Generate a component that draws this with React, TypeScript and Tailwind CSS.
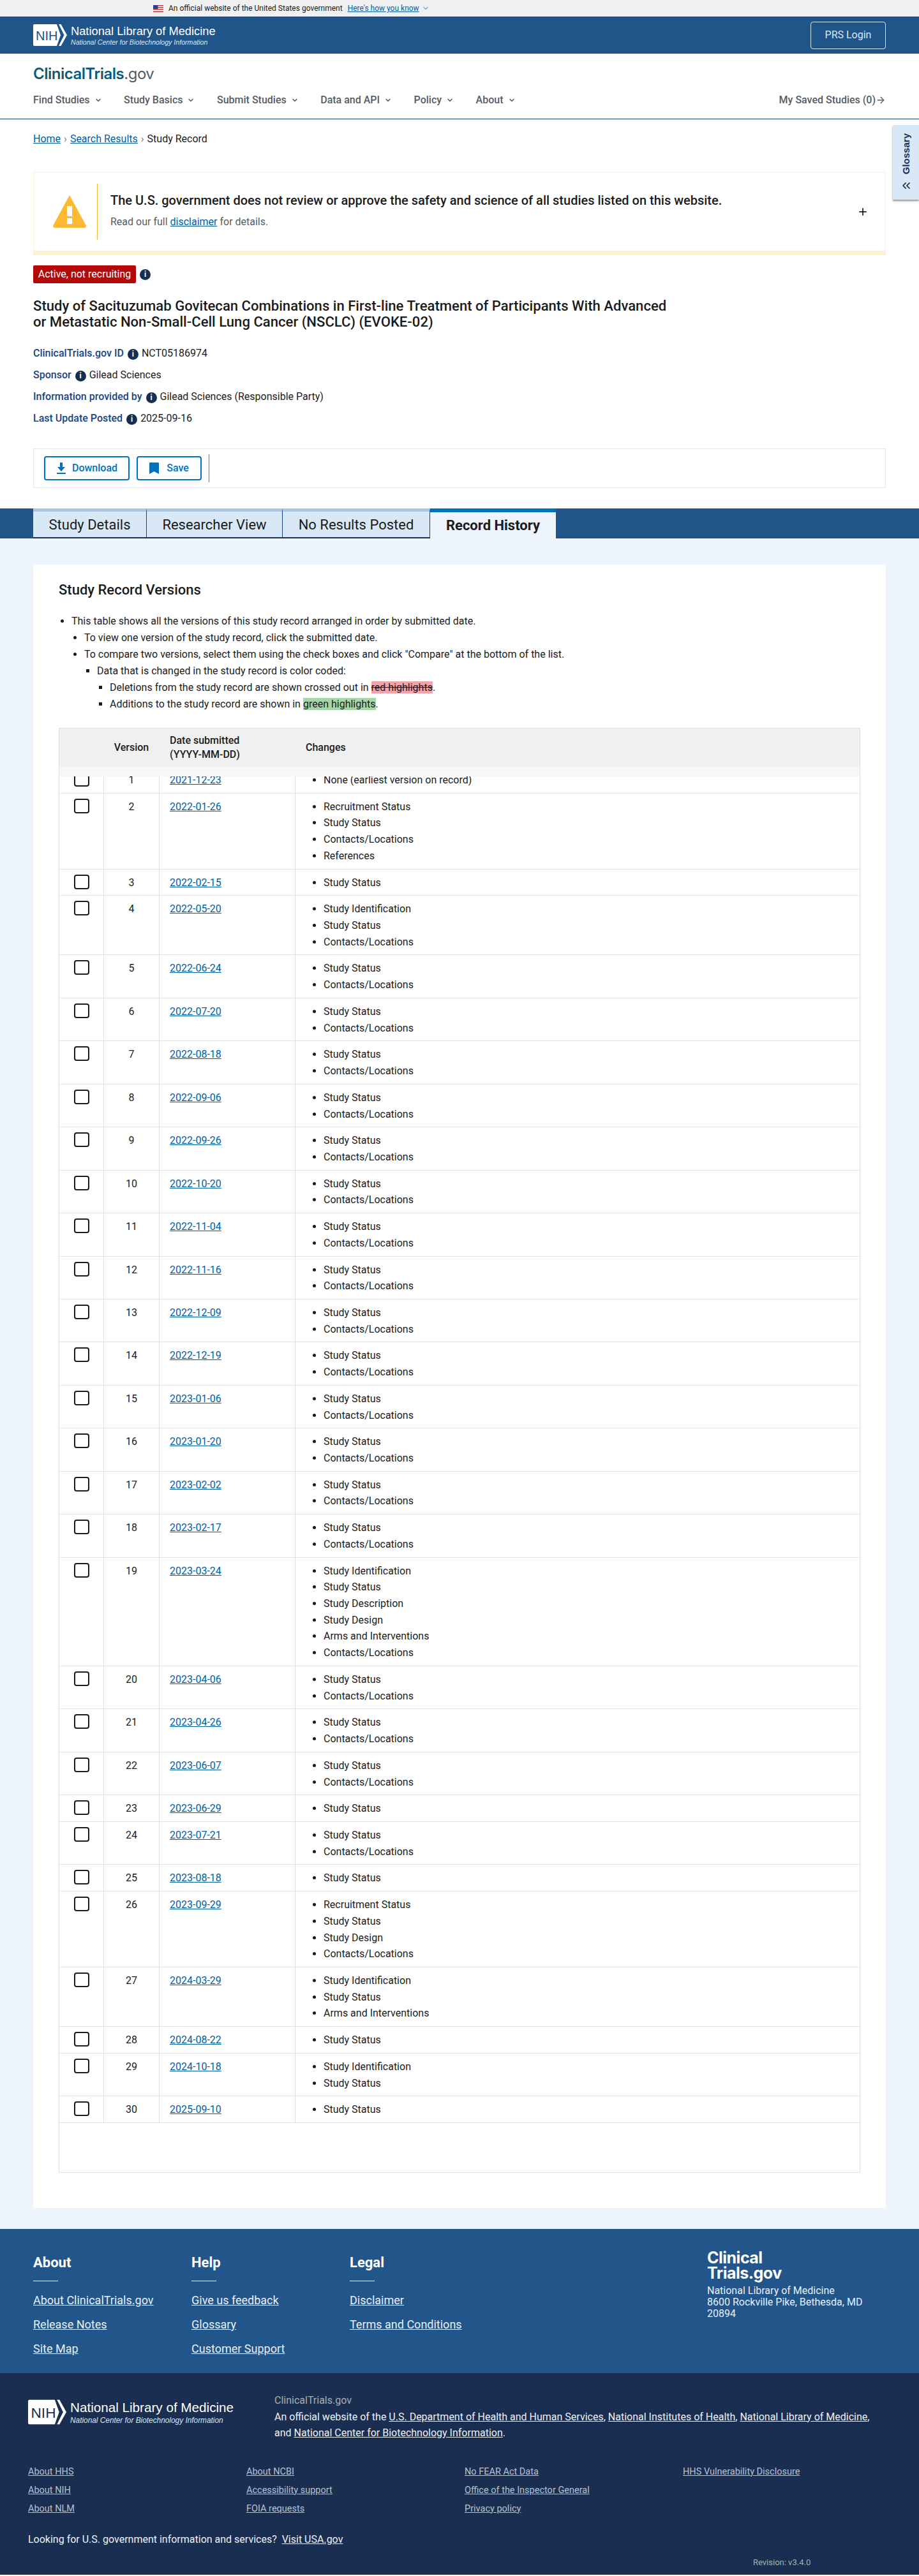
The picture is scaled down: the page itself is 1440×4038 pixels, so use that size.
import React from 'react';
import { ArrowRight, ChevronDown, ChevronsLeft, Plus } from 'lucide-react';

const SS = 'Study Status';
const CL = 'Contacts/Locations';
const SI = 'Study Identification';
const RS = 'Recruitment Status';
const AI = 'Arms and Interventions';

const VERSIONS: { date: string; changes: string[] }[] = [
  { date: '2021-12-23', changes: ['None (earliest version on record)'] },
  { date: '2022-01-26', changes: [RS, SS, CL, 'References'] },
  { date: '2022-02-15', changes: [SS] },
  { date: '2022-05-20', changes: [SI, SS, CL] },
  { date: '2022-06-24', changes: [SS, CL] },
  { date: '2022-07-20', changes: [SS, CL] },
  { date: '2022-08-18', changes: [SS, CL] },
  { date: '2022-09-06', changes: [SS, CL] },
  { date: '2022-09-26', changes: [SS, CL] },
  { date: '2022-10-20', changes: [SS, CL] },
  { date: '2022-11-04', changes: [SS, CL] },
  { date: '2022-11-16', changes: [SS, CL] },
  { date: '2022-12-09', changes: [SS, CL] },
  { date: '2022-12-19', changes: [SS, CL] },
  { date: '2023-01-06', changes: [SS, CL] },
  { date: '2023-01-20', changes: [SS, CL] },
  { date: '2023-02-02', changes: [SS, CL] },
  { date: '2023-02-17', changes: [SS, CL] },
  { date: '2023-03-24', changes: [SI, SS, 'Study Description', 'Study Design', AI, CL] },
  { date: '2023-04-06', changes: [SS, CL] },
  { date: '2023-04-26', changes: [SS, CL] },
  { date: '2023-06-07', changes: [SS, CL] },
  { date: '2023-06-29', changes: [SS] },
  { date: '2023-07-21', changes: [SS, CL] },
  { date: '2023-08-18', changes: [SS] },
  { date: '2023-09-29', changes: [RS, SS, 'Study Design', CL] },
  { date: '2024-03-29', changes: [SI, SS, AI] },
  { date: '2024-08-22', changes: [SS] },
  { date: '2024-10-18', changes: [SI, SS] },
  { date: '2025-09-10', changes: [SS] },
];

const NAV = ['Find Studies', 'Study Basics', 'Submit Studies', 'Data and API', 'Policy', 'About'];

const NihLogo = ({ ink, width, height }: { ink: string; width: number; height: number }) => (
  <svg width={width} height={height} viewBox="0 0 53 34" className="shrink-0">
    <path d="M2 0H37L43 17L37 34H2a2 2 0 0 1-2-2V2a2 2 0 0 1 2-2z" fill="#fff" />
    <path d="M40 0h3.500L53 17L43.500 34H40L48.500 17z" fill="#fff" />
    <text x="4" y="25" fontFamily="Liberation Sans, sans-serif" fontSize="20" fill={ink}>NIH</text>
  </svg>
);

const InfoDot = () => (
  <span className="inline-flex h-[17px] w-[17px] shrink-0 items-center justify-center rounded-full bg-[#162e51] text-[12px] font-bold leading-none text-white">
    i
  </span>
);

const MetaRow = ({ label, value }: { label: string; value: string }) => (
  <div className="flex h-6 items-center">
    <span className="font-medium text-[#1a4480]">{label}</span>
    <span className="ml-[6px] mr-[5px]"><InfoDot /></span>
    <span className="text-[#1b1b1b]">{value}</span>
  </div>
);

const Tab = ({ label, className }: { label: string; className: string }) => (
  <div className={`flex h-[47px] items-center justify-center border-t-[5px] border-b-2 border-r border-t-[#a8c6e6] border-b-[#162e51] border-r-[#1a4480] bg-[#d9e8f6] text-[22px] text-[#1b1b1b] ${className}`}>
    {label}
  </div>
);

const FooterColumn = ({ title, links }: { title: string; links: string[] }) => (
  <div className="w-[248px]">
    <div className="text-[22px] font-bold leading-[28px] text-white">{title}</div>
    <div className="mt-[14px] h-px w-[39px] bg-white" />
    <div className="mt-[16px] flex flex-col gap-[10px]">
      {links.map((l) => (
        <a key={l} className="block h-[28px] text-[18px] leading-[28px] text-[#e8f0f8] underline">{l}</a>
      ))}
    </div>
  </div>
);

const SmallLinks = ({ links, className }: { links: string[]; className: string }) => (
  <div className={`flex flex-col gap-[9px] ${className}`}>
    {links.map((l) => (
      <a key={l} className="block h-5 text-[14.500px] leading-5 text-[#b5c2d4] underline">{l}</a>
    ))}
  </div>
);

export default function App() {
  return (
    <div className="relative bg-white [font-family:Roboto,sans-serif] text-[16px] text-[#1b1b1b]">
      {/* Gov banner */}
      <div className="flex h-[26px] items-center bg-[#f0f0f0] pl-[240px] text-[12px]">
        <svg width="16" height="11" viewBox="0 0 16 11" className="shrink-0">
          <rect width="16" height="11" fill="#fff" />
          <path d="M0 0h16v1.500H0zM0 3h16v1.500H0zM0 6h16v1.500H0zM0 9.500h16V11H0z" fill="#c8372d" />
          <rect width="7.500" height="6" fill="#2f3f8f" />
        </svg>
        <span className="ml-2">An official website of the United States government</span>
        <a className="ml-2 text-[#005ea2] underline">Here's how you know</a>
        <ChevronDown className="ml-1 h-3 w-3 text-[#005ea2]" />
      </div>

      {/* NIH bar */}
      <div className="flex h-[58px] items-center justify-between border-y border-y-[#1a4070] bg-[#20558a] pl-[52px] pr-[52px]">
        <div className="flex items-center">
          <NihLogo ink="#20558a" width={53} height={34} />
          <div className="ml-[6px] [font-family:'Liberation_Sans',sans-serif] text-white">
            <div className="text-[18.300px] leading-[21px]">National Library of Medicine</div>
            <div className="text-[10.600px] italic leading-[14px] text-[#d9e8f6]">National Center for Biotechnology Information</div>
          </div>
        </div>
        <button className="h-[43px] w-[118px] rounded-[4px] border border-[#d9e8f6] text-[16px] text-[#d9e8f6]">PRS Login</button>
      </div>

      {/* Site nav */}
      <div className="h-[103px] border-b border-b-[#1a4a70] px-[52px]">
        <div className="pt-[17px] text-[24px] leading-[30px] [font-family:Inter,sans-serif] font-semibold tracking-[-0.5px] text-[#0b5a7a]">
          ClinicalTrials<span className="font-normal text-[#565c65]">.gov</span>
        </div>
        <div className="mt-[14px] flex items-center justify-between">
          <div className="flex items-center">
            {NAV.map((n) => (
              <div key={n} className="mr-[34.500px] flex items-center font-medium text-[#565c65]">
                {n}
                <ChevronDown className="ml-[7px] h-3 w-3" strokeWidth={3} />
              </div>
            ))}
          </div>
          <div className="flex items-center font-medium text-[#565c65]">
            My Saved Studies (0)
            <ArrowRight className="h-4 w-4" />
          </div>
        </div>
      </div>

      {/* Glossary tab */}
      <div className="absolute right-0 top-[196px] flex h-[117px] w-[41px] flex-col items-center rounded-tl-[2px] bg-[#d9e8f6] pt-[13px] text-[#162e51] shadow-[0_2px_3px_rgba(0,0,0,0.45)]">
        <span className="rotate-180 text-[15px] font-bold leading-none [font-family:'Liberation_Sans',sans-serif] [writing-mode:vertical-rl]">Glossary</span>
        <ChevronsLeft className="mt-[8px] h-[20px] w-[20px]" />
      </div>

      <div className="px-[52px] pb-[32px]">
        <div className="mt-[19px] flex h-6 items-center text-[16px]">
          <a className="text-[#005ea2] underline">Home</a>
          <span className="mx-[5px] text-[#71767a]">›</span>
          <a className="text-[#005ea2] underline">Search Results</a>
          <span className="mx-[5px] text-[#71767a]">›</span>
          <span>Study Record</span>
        </div>

        {/* Disclaimer */}
        <div className="mt-[39px] flex h-[131px] items-center border border-b-[7px] border-[#faf3d1] pl-[30px] pr-[26px]">
          <svg width="52" height="53" viewBox="0 0 52 53" className="shrink-0">
            <path d="M26 1L51 47a3 3 0 0 1-3 5H4a3 3 0 0 1-3-5z" fill="#ffb832" />
            <rect x="22" y="18" width="8" height="16" fill="#fff" />
            <rect x="22" y="37" width="8" height="9" fill="#fff" />
          </svg>
          <div className="ml-[17px] h-[88px] w-px shrink-0 bg-[#f1b434]" />
          <div className="ml-5 flex-1 pb-[3px]">
            <div className="text-[20px] font-medium leading-[28px] text-[#1b1b1b]">
              The U.S. government does not review or approve the safety and science of all studies listed on this website.
            </div>
            <div className="mt-[8px] leading-6 text-[#565c65]">
              Read our full <a className="text-[#005ea2] underline">disclaimer</a> for details.
            </div>
          </div>
          <Plus className="h-[18px] w-[18px] shrink-0 text-black" />
        </div>

        {/* Study summary */}
        <div className="mt-[16px] flex items-center">
          <span className="flex h-[28px] w-[161px] items-center justify-center rounded-[2px] bg-[#b50909] text-white">Active, not recruiting</span>
          <span className="-mt-[2px] ml-[6px]"><InfoDot /></span>
        </div>
        <h1 className="mt-[23px] w-[1010px] text-[22.100px] font-medium leading-[25px] text-[#1b1b1b]">
          Study of Sacituzumab Govitecan Combinations in First-line Treatment of Participants With Advanced or Metastatic Non-Small-Cell Lung Cancer (NSCLC) (EVOKE-02)
        </h1>
        <div className="mt-[25px] flex flex-col gap-[10px]">
          <MetaRow label="ClinicalTrials.gov ID" value="NCT05186974" />
          <MetaRow label="Sponsor" value="Gilead Sciences" />
          <MetaRow label="Information provided by" value="Gilead Sciences (Responsible Party)" />
          <MetaRow label="Last Update Posted" value="2025-09-16" />
        </div>

        {/* Actions */}
        <div className="mt-[35px] flex h-[62px] items-center border border-[#e6e6e6] pl-[16px]">
          <button className="flex h-[38px] w-[134px] items-center justify-center rounded-[4px] border-2 border-[#0071bc] font-medium text-[#0071bc]">
            <svg width="16" height="18" viewBox="0 0 16 18" className="mr-[9px]">
              <path d="M6 0h4v7h4l-6 7-6-7h4z" fill="#0071bc" />
              <rect x="1" y="16" width="14" height="2" fill="#0071bc" />
            </svg>
            Download
          </button>
          <button className="ml-[11px] flex h-[38px] w-[102px] items-center justify-center rounded-[4px] border-2 border-[#0071bc] font-medium text-[#0071bc]">
            <svg width="15" height="18" viewBox="0 0 15 18" className="mr-[12px]">
              <path d="M1 0h13a1 1 0 0 1 1 1v17l-7.500-4L0 18V1a1 1 0 0 1 1-1z" fill="#0071bc" />
            </svg>
            Save
          </button>
          <div className="ml-[11px] h-[44px] w-px bg-[#71767a]" />
        </div>
      </div>

      {/* Tabs */}
      <div className="flex h-[47px] bg-[#20558a] pl-[52px]">
        <Tab label="Study Details" className="w-[178px]" />
        <Tab label="Researcher View" className="w-[213px]" />
        <Tab label="No Results Posted" className="w-[231px]" />
        <div className="flex h-[47px] w-[197px] items-center justify-center border-t-[6px] border-t-[#0071bc] bg-[#edf4fb] text-[22px] font-bold text-[#1b1b1b]">
          Record History
        </div>
      </div>

      {/* Record history */}
      <div className="bg-[#edf4fb] px-[52px] pb-[33px] pt-[41px]">
        <div className="h-[2576px] bg-white px-[40px] pt-[25px]">
          <h2 className="text-[22px] font-medium leading-[30px]">Study Record Versions</h2>
          <ul className="mt-[21px] list-disc pl-[20px] leading-[26px] text-[#1b1b1b]">
            <li>This table shows all the versions of this study record arranged in order by submitted date.
              <ul className="list-disc pl-[20px]">
                <li>To view one version of the study record, click the submitted date.</li>
                <li>To compare two versions, select them using the check boxes and click "Compare" at the bottom of the list.
                  <ul className="list-[square] pl-[20px]">
                    <li>Data that is changed in the study record is color coded:
                      <ul className="list-[square] pl-[20px]">
                        <li>Deletions from the study record are shown crossed out in <span className="bg-[#f4a3ab] line-through">red highlights</span>.</li>
                        <li>Additions to the study record are shown in <span className="bg-[#a3d7a9]">green highlights</span>.</li>
                      </ul>
                    </li>
                  </ul>
                </li>
              </ul>
            </li>
          </ul>

          <div className="mt-[24px] h-[2265px] border border-[#dfe1e2]">
            {/* header */}
            <div className="grid h-[60px] grid-cols-[69px_87px_213px_1fr] bg-[#f0f0f0] font-medium">
              <div />
              <div className="flex items-center justify-center border-l border-[#ebebeb]">Version</div>
              <div className="flex items-center border-l border-[#ebebeb] pl-4 leading-[22px]">Date submitted<br />(YYYY-MM-DD)</div>
              <div className="flex items-center border-l border-[#ebebeb] pl-4">Changes</div>
            </div>
            <div className="relative z-10 -mb-[15px] h-[15px] bg-[#f7f7f7]" />
            {VERSIONS.map((v, i) => (
              <div key={v.date} className="grid grid-cols-[69px_87px_213px_1fr] border-b border-[#dfe1e2]">
                <div className="flex justify-center pt-[8px]">
                  <span className="h-[23px] w-[24px] rounded-[4px] border-2 border-[#1b1b1b]" />
                </div>
                <div className="border-l border-[#dfe1e2] pt-[8px] text-center leading-[26px]">{i + 1}</div>
                <div className="border-l border-[#dfe1e2] pl-4 pt-[8px] leading-[26px]">
                  <a className="text-[#005ea2] underline">{v.date}</a>
                </div>
                <ul className="list-disc border-l border-[#dfe1e2] pb-[7px] pl-[44px] pt-[8px]">
                  {v.changes.map((c) => (
                    <li key={c} className="h-[25.720px] leading-[26px]">{c}</li>
                  ))}
                </ul>
              </div>
            ))}
          </div>
        </div>
      </div>

      {/* Footer */}
      <div className="flex h-[226px] bg-[#22558a] pl-[52px] pt-[39px]">
        <FooterColumn title="About" links={['About ClinicalTrials.gov', 'Release Notes', 'Site Map']} />
        <FooterColumn title="Help" links={['Give us feedback', 'Glossary', 'Customer Support']} />
        <FooterColumn title="Legal" links={['Disclaimer', 'Terms and Conditions']} />
        <div className="ml-[312px] w-[280px] text-white">
          <div className="mt-[-6px] text-[25px] font-bold leading-[24px] tracking-[-0.5px] [font-family:Inter,sans-serif]">Clinical<br />Trials.gov</div>
          <div className="mt-[7px] leading-[18px] text-[#e8f0f8]">National Library of Medicine<br />8600 Rockville Pike, Bethesda, MD<br />20894</div>
        </div>
      </div>

      <div className="h-[316px] bg-[#1a2e52] pl-[44px] pr-[44px] pt-[41px]">
        <div className="flex">
          <div className="flex w-[386px] items-start">
            <NihLogo ink="#1a2e52" width={60} height={40} />
            <div className="ml-[6px] [font-family:'Liberation_Sans',sans-serif] text-white">
              <div className="text-[20.660px] leading-[26px]">National Library of Medicine</div>
              <div className="text-[11.850px] italic leading-[14px] text-[#d9e8f6]">National Center for Biotechnology Information</div>
            </div>
          </div>
          <div className="-mt-[11px] text-[16px] leading-[25.500px]">
            <div className="text-[#a9aeb1]">ClinicalTrials.gov</div>
            <div className="text-[#f0f0f0]">
              An official website of the <a className="underline">U.S. Department of Health and Human Services</a>, <a className="underline">National Institutes of Health</a>, <a className="underline">National Library of Medicine</a>,
            </div>
            <div className="text-[#f0f0f0]">and <a className="underline">National Center for Biotechnology Information</a>.</div>
          </div>
        </div>
        <div className="mt-[38px] flex">
          <SmallLinks links={['About HHS', 'About NIH', 'About NLM']} className="w-[342px]" />
          <SmallLinks links={['About NCBI', 'Accessibility support', 'FOIA requests']} className="w-[342px]" />
          <SmallLinks links={['No FEAR Act Data', 'Office of the Inspector General', 'Privacy policy']} className="w-[342px]" />
          <SmallLinks links={['HHS Vulnerability Disclosure']} className="w-[300px]" />
        </div>
        <div className="mt-[26px] text-[#f0f0f0]">
          Looking for U.S. government information and services?&nbsp; <a className="underline">Visit USA.gov</a>
        </div>
        <div className="ml-[1136px] mt-[16px] text-[13px] leading-4 text-[#a9aeb1]">Revision: v3.4.0</div>
      </div>
    </div>
  );
}
